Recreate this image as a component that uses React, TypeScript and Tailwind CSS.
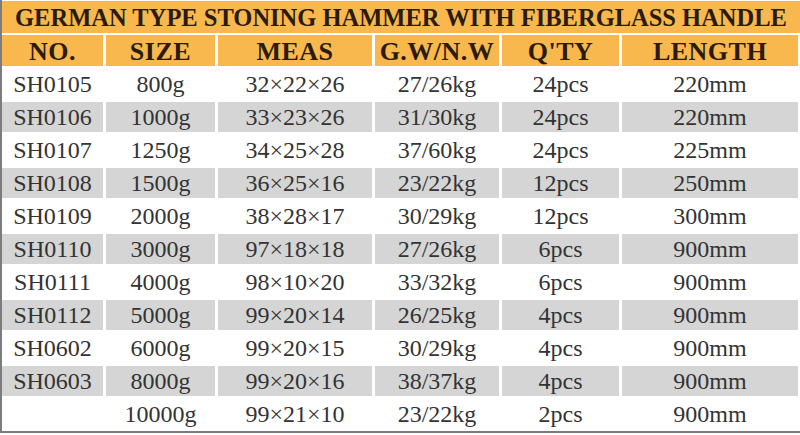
import React from 'react'

const rows = [
  ['SH0105', '800g', '32×22×26', '27/26kg', '24pcs', '220mm'],
  ['SH0106', '1000g', '33×23×26', '31/30kg', '24pcs', '220mm'],
  ['SH0107', '1250g', '34×25×28', '37/60kg', '24pcs', '225mm'],
  ['SH0108', '1500g', '36×25×16', '23/22kg', '12pcs', '250mm'],
  ['SH0109', '2000g', '38×28×17', '30/29kg', '12pcs', '300mm'],
  ['SH0110', '3000g', '97×18×18', '27/26kg', '6pcs', '900mm'],
  ['SH0111', '4000g', '98×10×20', '33/32kg', '6pcs', '900mm'],
  ['SH0112', '5000g', '99×20×14', '26/25kg', '4pcs', '900mm'],
  ['SH0602', '6000g', '99×20×15', '30/29kg', '4pcs', '900mm'],
  ['SH0603', '8000g', '99×20×16', '38/37kg', '4pcs', '900mm'],
  ['', '10000g', '99×21×10', '23/22kg', '2pcs', '900mm'],
]

const headers = ['NO.', 'SIZE', 'MEAS', 'G.W/N.W', "Q'TY", 'LENGTH']

export default function App() {
  return (
    <div className="w-[800px] h-[435px] bg-white overflow-hidden">
      <div className="h-[433px] border-l-2 border-b-2 border-[#7c7c7c] pt-px">
        <div className="h-[32px] bg-[#f8b84e] flex items-center justify-center pt-[2px]">
          <span
            className="text-[24.5px] font-bold text-[#2a1b0b] leading-none whitespace-nowrap"
            style={{ fontFamily: '"Liberation Serif", serif' }}
          >
            GERMAN TYPE STONING HAMMER WITH FIBERGLASS HANDLE
          </span>
        </div>
        <div
          className="mt-[2px] grid grid-cols-[101px_109px_154px_124px_117px_176px] gap-x-[3px] gap-y-[3px] grid-rows-[31px_repeat(11,30px)]"
          style={{ fontFamily: '"Liberation Serif", serif' }}
        >
          {headers.map((h) => (
            <div
              key={h}
              className="bg-[#f8b84e] flex items-center justify-center pt-[3px] text-[26px] font-bold text-[#2a1b0b] leading-none tracking-[0.5px]"
            >
              {h}
            </div>
          ))}
          {rows.map((r, i) =>
            r.map((c, j) => (
              <div
                key={`${i}-${j}`}
                className={`flex items-center justify-center text-[24px] text-[#333333] leading-none ${
                  i % 2 === 1 ? 'bg-[#d5d5d5]' : 'bg-white'
                }`}
              >
                {c}
              </div>
            ))
          )}
        </div>
      </div>
    </div>
  )
}
